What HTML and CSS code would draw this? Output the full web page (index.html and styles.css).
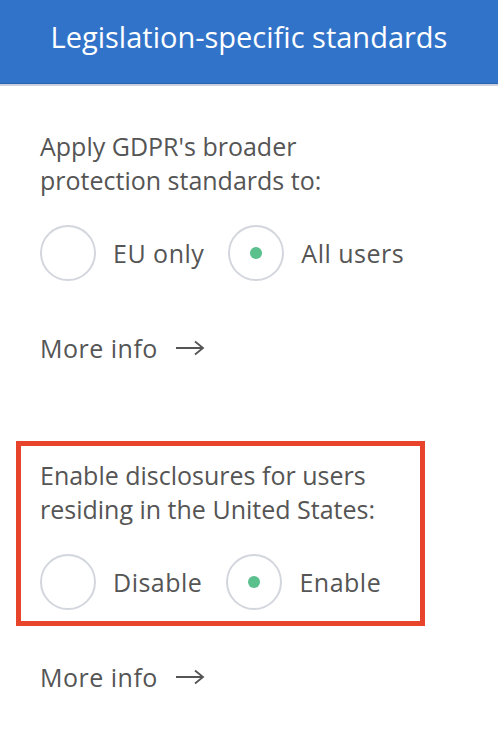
FILE: index.html
```html
<!DOCTYPE html>
<html>
<head>
<meta charset="utf-8">
<link rel="stylesheet" href="styles.css">
</head>
<body>
<header class="header">Legislation-specific standards</header>
<main class="content">
  <section class="setting">
    <p class="question">Apply GDPR's broader protection standards to:</p>
    <div class="options">
      <label class="option"><span class="radio"></span><span class="label">EU only</span></label>
      <label class="option"><span class="radio checked"></span><span class="label">All users</span></label>
    </div>
  </section>
  <a class="more" href="#">More info <svg class="arrow" width="30" height="16" viewBox="0 0 30 16"><path d="M1 8H28M20 1.5L28 8L20 14.5" fill="none" stroke="#555" stroke-width="1.8"/></svg></a>
  <section class="setting highlighted">
    <p class="question">Enable disclosures for users residing in the United States:</p>
    <div class="options">
      <label class="option"><span class="radio"></span><span class="label">Disable</span></label>
      <label class="option"><span class="radio checked"></span><span class="label">Enable</span></label>
    </div>
  </section>
  <a class="more more-last" href="#">More info <svg class="arrow" width="30" height="16" viewBox="0 0 30 16"><path d="M1 8H28M20 1.5L28 8L20 14.5" fill="none" stroke="#555" stroke-width="1.8"/></svg></a>
</main>
</body>
</html>
```
FILE: styles.css
```css
html, body {
  margin: 0;
  padding: 0;
  background: #ffffff;
}
body {
  font-family: "Open Sans", "Liberation Sans", sans-serif;
  color: #555555;
  width: 498px;
}
.header {
  height: 73px;
  padding: 0 0 10px 0;
  background: #3273ca;
  border-bottom: 1px solid #2a62b0;
  box-shadow: 0 2px 0 #c9d2de;
  color: #ffffff;
  font-size: 29px;
  display: flex;
  align-items: center;
  justify-content: center;
  box-sizing: content-box;
}
.content {
  padding: 45px 16px 0 16px;
  display: flex;
  flex-direction: column;
}
.setting {
  padding: 0 24px;
}
.question {
  margin: 0;
  font-size: 25px;
  line-height: 34px;
  width: 360px;
}
.options {
  display: flex;
  align-items: center;
  margin-top: 28px;
}
.option {
  display: flex;
  align-items: center;
  margin-right: 24px;
}
.radio {
  width: 52px;
  height: 52px;
  border: 2px solid #d3d7dd;
  border-radius: 50%;
  display: flex;
  align-items: center;
  justify-content: center;
  flex: none;
}
.radio.checked::after {
  content: "";
  width: 12px;
  height: 12px;
  border-radius: 50%;
  background: #5ac08e;
}
.label {
  font-size: 25px;
  margin-left: 17px;
  letter-spacing: 0.5px;
}
.more {
  display: flex;
  align-items: center;
  margin: 50px 0 0 24px;
  font-size: 25px;
  letter-spacing: 0.5px;
  color: #555555;
  text-decoration: none;
}
.more-last {
  margin-top: 34px;
}
.arrow {
  margin-left: 17px;
}
.highlighted {
  margin-top: 76px;
  border: 5px solid #e8432b;
  padding: 12px 19px 11px 19px;
  width: 361px;
}
.highlighted .options {
  margin-top: 28px;
}
```
